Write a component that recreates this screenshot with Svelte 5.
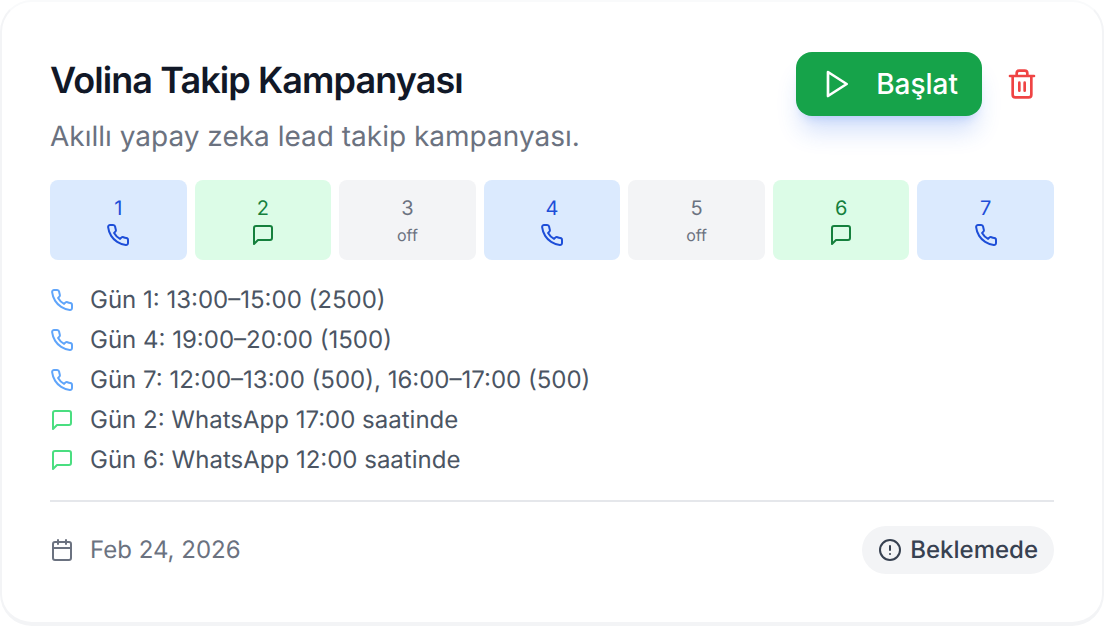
<script>
  const days = [
    { n: 1, t: 'call' }, { n: 2, t: 'msg' }, { n: 3, t: 'off' }, { n: 4, t: 'call' },
    { n: 5, t: 'off' }, { n: 6, t: 'msg' }, { n: 7, t: 'call' }
  ];
  const rows = [
    { t: 'call', s: 'Gün 1: 13:00–15:00 (2500)' },
    { t: 'call', s: 'Gün 4: 19:00–20:00 (1500)' },
    { t: 'call', s: 'Gün 7: 12:00–13:00 (500), 16:00–17:00 (500)' },
    { t: 'msg', s: 'Gün 2: WhatsApp 17:00 saatinde' },
    { t: 'msg', s: 'Gün 6: WhatsApp 12:00 saatinde' }
  ];
</script>

{#snippet phone()}
  <svg class="ic24" viewBox="0 0 24 24"><path d="M22 16.92v3a2 2 0 0 1-2.18 2 19.79 19.79 0 0 1-8.63-3.07 19.5 19.5 0 0 1-6-6 19.79 19.79 0 0 1-3.07-8.67A2 2 0 0 1 4.11 2h3a2 2 0 0 1 2 1.72 12.84 12.84 0 0 0 .7 2.81 2 2 0 0 1-.45 2.11L8.09 9.91a16 16 0 0 0 6 6l1.27-1.27a2 2 0 0 1 2.11-.45 12.84 12.84 0 0 0 2.81.7A2 2 0 0 1 22 16.92z"/></svg>
{/snippet}
{#snippet msg()}
  <svg class="ic24" viewBox="0 0 24 24"><path d="M21 15a2 2 0 0 1-2 2H7l-4 4V5a2 2 0 0 1 2-2h14a2 2 0 0 1 2 2z"/></svg>
{/snippet}

<div class="card">
  <header class="head">
    <div>
      <h1>Volina Takip Kampanyası</h1>
      <p class="sub">Akıllı yapay zeka lead takip kampanyası.</p>
    </div>
    <div class="actions">
      <button class="start">
        <svg class="ic32" viewBox="0 0 24 24"><path d="M6 3l14 9-14 9z"/></svg>
        <span>Başlat</span>
      </button>
      <button class="del" aria-label="Sil">
        <svg class="ic32" viewBox="0 0 24 24"><path d="M3 6h18M19 6v14a2 2 0 0 1-2 2H7a2 2 0 0 1-2-2V6M8 6V4a2 2 0 0 1 2-2h4a2 2 0 0 1 2 2v2M10 11v6M14 11v6"/></svg>
      </button>
    </div>
  </header>

  <div class="days">
    {#each days as d}
      <div class="day {d.t}">
        <span class="num">{d.n}</span>
        {#if d.t === 'call'}{@render phone()}{:else if d.t === 'msg'}{@render msg()}{:else}<span class="off-t">off</span>{/if}
      </div>
    {/each}
  </div>

  <ul class="list">
    {#each rows as r}
      <li class={r.t}>
        {#if r.t === 'call'}{@render phone()}{:else}{@render msg()}{/if}
        <span>{r.s}</span>
      </li>
    {/each}
  </ul>

  <footer class="foot">
    <div class="date">
      <svg class="ic24" viewBox="0 0 24 24"><rect x="3" y="4" width="18" height="18" rx="2"/><path d="M16 2v4M8 2v4M3 10h18"/></svg>
      <span>Feb 24, 2026</span>
    </div>
    <div class="badge">
      <svg class="ic24" viewBox="0 0 24 24"><circle cx="12" cy="12" r="10"/><path d="M12 8v4M12 16h.01"/></svg>
      <span>Beklemede</span>
    </div>
  </footer>
</div>

<style>
  :global(body) { margin: 0; background: #fff; }
  .card {
    box-sizing: border-box;
    width: 1104px;
    height: 626px;
    padding: 48px;
    border-style: solid;
    border-width: 2px 2px 4px;
    border-color: #f9fafb #f3f4f6 #f3f4f6;
    border-radius: 32px;
    background: #fff;
    font-family: Inter, "Noto Sans", sans-serif;
    text-rendering: geometricPrecision;
    color: #111827;
  }
  svg { fill: none; stroke: currentColor; stroke-width: 2; stroke-linecap: round; stroke-linejoin: round; flex: none; display: block; }
  .ic24 { width: 24px; height: 24px; }
  .ic32 { width: 32px; height: 32px; }
  .head { display: flex; justify-content: space-between; align-items: flex-start; height: 130px; }
  h1 { margin: 0; font-size: 36px; line-height: 60px; font-weight: 600; letter-spacing: -0.92px; color: #111827; }
  .sub { margin: 6px 0 0; font-size: 28px; line-height: 40px; color: #6b7280; }
  .actions { display: flex; align-items: center; gap: 8px; padding-top: 2px; }
  button { border: 0; background: none; padding: 0; font: inherit; display: flex; align-items: center; }
  .start {
    height: 64px; padding: 0 24px; gap: 24px;
    box-sizing: border-box;
    background: #16a34a; color: #fff; border-radius: 16px;
    font-size: 28px; font-weight: 500;
    box-shadow: 0 20px 25px -5px rgba(37, 99, 235, 0.2), 0 8px 10px -6px rgba(37, 99, 235, 0.2);
  }
  .del { color: #ef4444; width: 64px; height: 64px; justify-content: center; }
  .days { display: grid; grid-template-columns: repeat(7, 1fr); gap: 8px; }
  .day { height: 80px; padding-top: 1px; border-radius: 8px; display: flex; flex-direction: column; align-items: center; justify-content: center; font-size: 20px; line-height: 28px; font-weight: 400; box-sizing: border-box; }
  .day .num { display: block; margin-bottom: 1px; }
  .day.call { background: #dbeafe; color: #1d4ed8; }
  .day.msg { background: #dcfce7; color: #15803d; }
  .day.off { background: #f3f4f6; color: #6b7280; }
  .off-t { font-size: 16px; line-height: 24px; }
  .list { list-style: none; margin: 20px 0 0; padding: 0; }
  .list li { display: flex; align-items: center; gap: 16px; height: 40px; font-size: 24px; color: #4b5563; }
  .list li span { position: relative; top: -1px; }
  .list li.call svg { color: #60a5fa; }
  .list li.msg svg { color: #4ade80; }
  .foot { margin-top: 20px; border-top: 2px solid #e5e7eb; padding-top: 24px; display: flex; justify-content: space-between; align-items: center; }
  .date { display: flex; align-items: center; gap: 16px; font-size: 24px; color: #6b7280; }
  .date span, .badge span { position: relative; top: -1px; }
  .badge { display: flex; align-items: center; gap: 8px; height: 48px; padding: 0 16px; border-radius: 24px; background: #f3f4f6; color: #374151; font-size: 24px; font-weight: 500; }
</style>
